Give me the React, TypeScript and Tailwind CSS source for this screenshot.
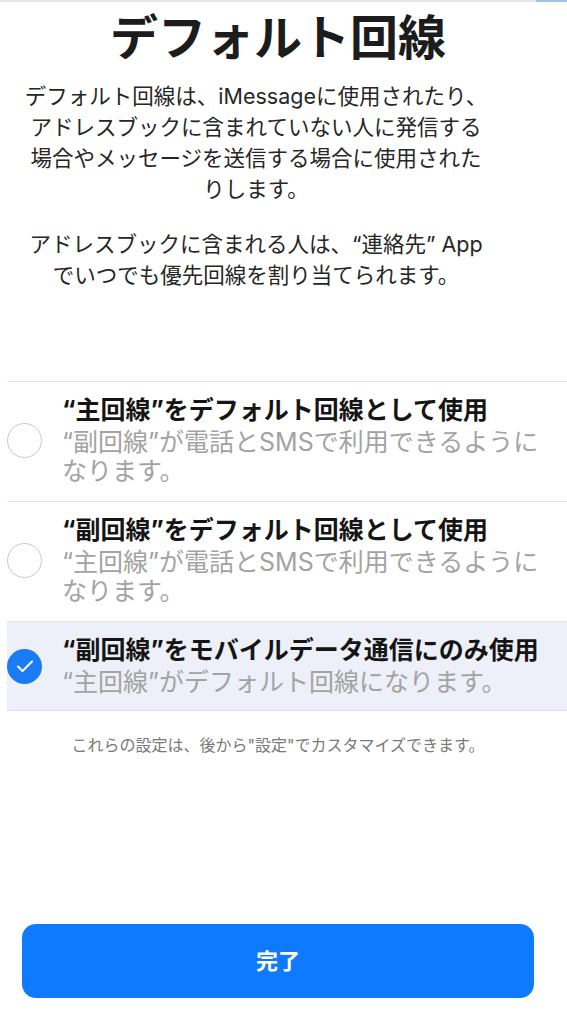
import React, { useState } from 'react';

type Option = {
  id: number;
  title: string;
  sub: React.ReactNode;
};

const options: Option[] = [
  {
    id: 1,
    title: '“主回線”をデフォルト回線として使用',
    sub: (
      <>
        “副回線”が電話とSMSで利用できるように
        <br />
        なります。
      </>
    ),
  },
  {
    id: 2,
    title: '“副回線”をデフォルト回線として使用',
    sub: (
      <>
        “主回線”が電話とSMSで利用できるように
        <br />
        なります。
      </>
    ),
  },
  {
    id: 3,
    title: '“副回線”をモバイルデータ通信にのみ使用',
    sub: <>“主回線”がデフォルト回線になります。</>,
  },
];

const Radio: React.FC<{ checked: boolean }> = ({ checked }) =>
  checked ? (
    <div className="w-[35px] h-[35px] rounded-full bg-[#1a7cf5] flex items-center justify-center shrink-0">
      <svg width="22" height="22" viewBox="0 0 22 22" fill="none">
        <path d="M4 11.5l4.5 4.5L18 6.5" stroke="white" strokeWidth="2" strokeLinecap="round" strokeLinejoin="round" />
      </svg>
    </div>
  ) : (
    <div className="w-[35px] h-[35px] rounded-full border-[1.5px] border-[#c9c9c9] shrink-0" />
  );

const App: React.FC = () => {
  const [selected, setSelected] = useState(3);

  return (
    <div className="h-[1024px] bg-white flex flex-col font-['Inter','Noto_Sans_CJK_JP',sans-serif] text-[#1c1c1c]">
      {/* top edge */}
      <div className="flex h-[2px]">
        <div className="flex-1 bg-[#e6e6e6]" />
        <div className="w-[31px] bg-[#9fc4ea]" />
      </div>

      <h1 className="mt-[7px] pr-[11px] text-center text-[48px] leading-[58px] font-bold">デフォルト回線</h1>

      <p className="mt-[14px] pl-[14px] pr-[69px] text-center text-[21.5px] leading-[31px] text-[#262626] whitespace-nowrap">
        デフォルト回線は、iMessageに使用されたり、
        <br />
        アドレスブックに含まれていない人に発信する
        <br />
        場合やメッセージを送信する場合に使用された
        <br />
        りします。
      </p>
      <p className="mt-[24px] pl-[14px] pr-[69px] text-center text-[21.5px] leading-[31px] text-[#262626] whitespace-nowrap">
        アドレスブックに含まれる人は、“連絡先” App
        <br />
        でいつでも優先回線を割り当てられます。
      </p>

      {/* options */}
      <ul className="mt-[90px] ml-[7px] border-b border-[#e3e3e3]">
        {options.map(opt => (
          <li
            key={opt.id}
            onClick={() => setSelected(opt.id)}
            className={`flex items-center gap-[20px] border-t border-[#e3e3e3] pt-[13px] ${opt.id === 3 ? 'pb-[13px]' : 'pb-[15px]'} ${selected === opt.id ? 'bg-[#edf0f8]' : ''}`}
          >
            <Radio checked={selected === opt.id} />
            <div className="whitespace-nowrap">
              <div className="text-[25px] leading-[30px] font-bold text-[#151515]">{opt.title}</div>
              <div className="mt-[3px] text-[25px] leading-[29px] text-[#a3a3a3]">{opt.sub}</div>
            </div>
          </li>
        ))}
      </ul>

      <p className="mt-[24px] pr-[11px] text-center text-[16px] leading-[20px] text-[#7a7a7a]">
        これらの設定は、後から"設定"でカスタマイズできます。
      </p>

      <button className="mt-auto mb-[26px] ml-[22px] mr-[33px] h-[74px] rounded-[14px] bg-[#0e7bff] text-white text-[22px] font-semibold">
        完了
      </button>
    </div>
  );
};

export default App;
